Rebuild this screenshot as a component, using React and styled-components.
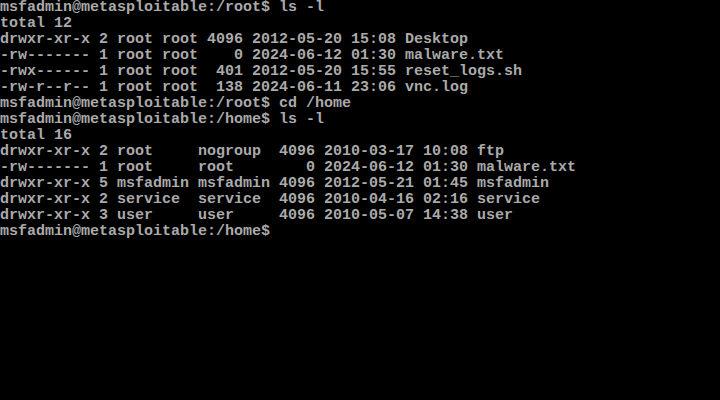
import React from 'react';
import styled, { createGlobalStyle } from 'styled-components';

const GlobalStyle = createGlobalStyle`
  html, body {
    margin: 0;
    padding: 0;
    background: #000;
  }
`;

const Screen = styled.div`
  width: 720px;
  height: 400px;
  overflow: hidden;
  background: #000;
  color: #aaaaaa;
  font-family: "Liberation Mono", "DejaVu Sans Mono", monospace;
  font-size: 15px;
  font-weight: bold;
  line-height: 16px;
`;

const Line = styled.div`
  height: 16px;
  white-space: pre;
`;

const lines = [
  'msfadmin@metasploitable:/root$ ls -l',
  'total 12',
  'drwxr-xr-x 2 root root 4096 2012-05-20 15:08 Desktop',
  '-rw------- 1 root root    0 2024-06-12 01:30 malware.txt',
  '-rwx------ 1 root root  401 2012-05-20 15:55 reset_logs.sh',
  '-rw-r--r-- 1 root root  138 2024-06-11 23:06 vnc.log',
  'msfadmin@metasploitable:/root$ cd /home',
  'msfadmin@metasploitable:/home$ ls -l',
  'total 16',
  'drwxr-xr-x 2 root     nogroup  4096 2010-03-17 10:08 ftp',
  '-rw------- 1 root     root        0 2024-06-12 01:30 malware.txt',
  'drwxr-xr-x 5 msfadmin msfadmin 4096 2012-05-21 01:45 msfadmin',
  'drwxr-xr-x 2 service  service  4096 2010-04-16 02:16 service',
  'drwxr-xr-x 3 user     user     4096 2010-05-07 14:38 user',
  'msfadmin@metasploitable:/home$',
];

const App = () => (
  <>
    <GlobalStyle />
    <Screen>
      {lines.map((text, i) => (
        <Line key={i}>{text}</Line>
      ))}
    </Screen>
  </>
);

export default App;
